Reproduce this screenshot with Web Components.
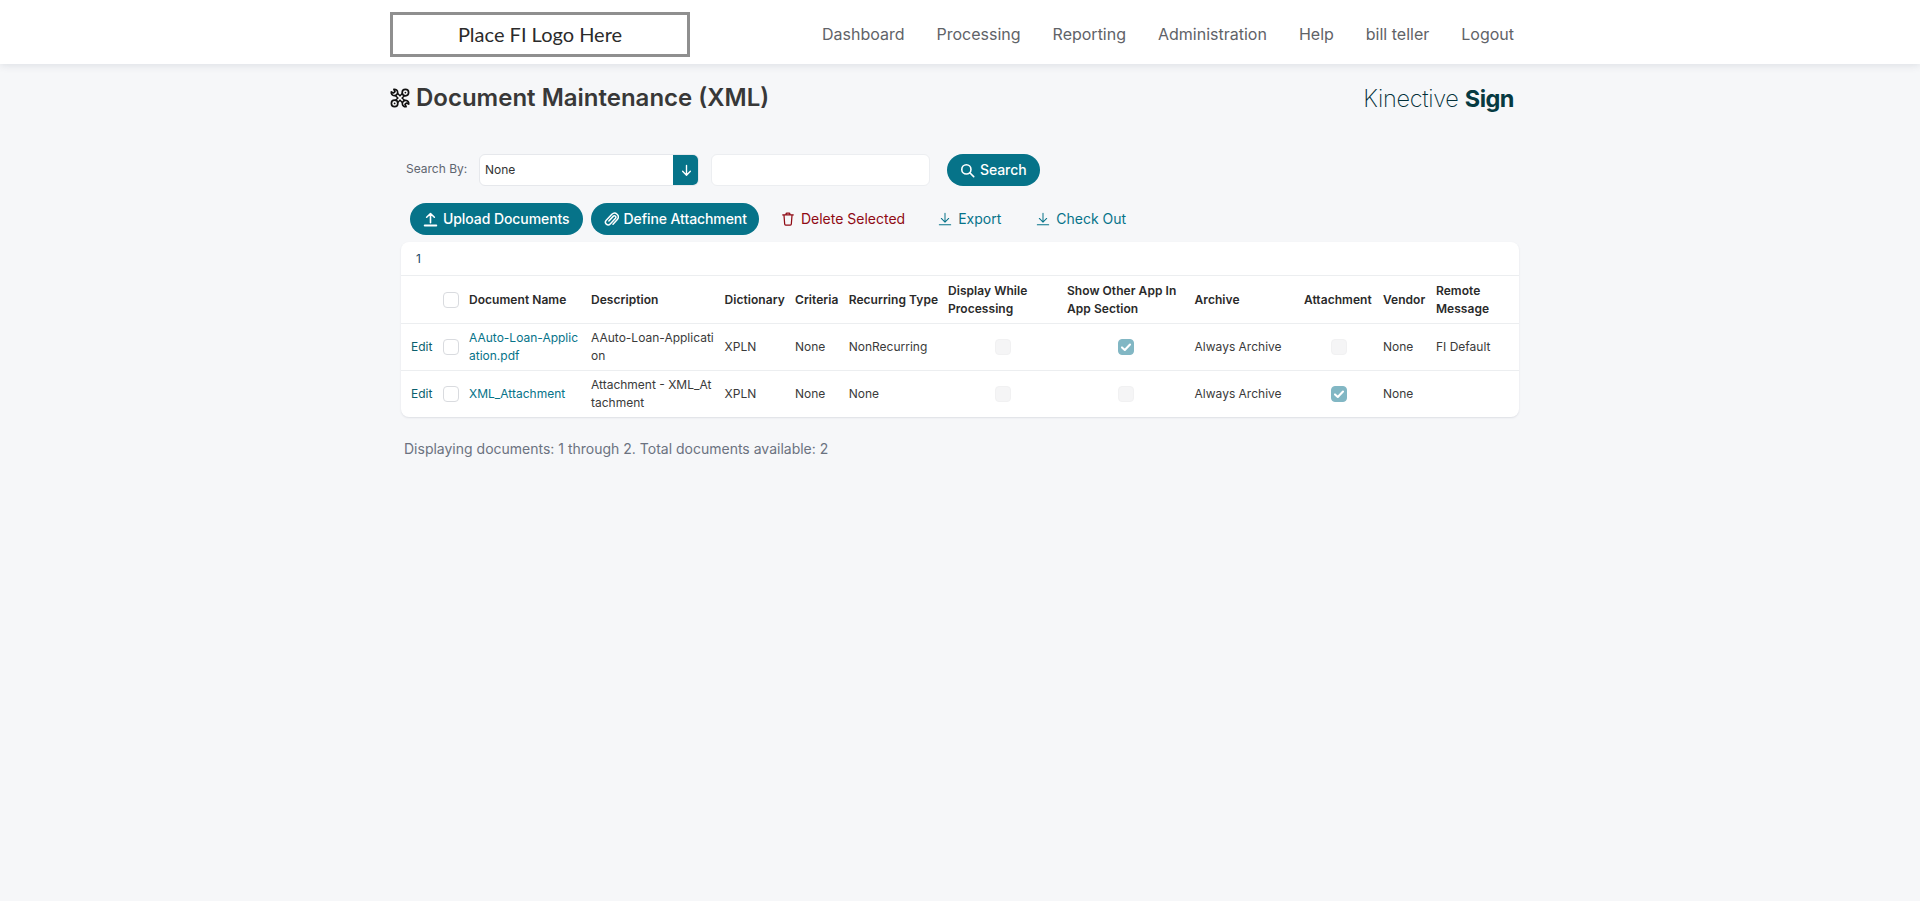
<!DOCTYPE html>
<html lang="en"><head><meta charset="utf-8"><title>Document Maintenance (XML)</title>
<style>
html,body{margin:0;padding:0;background:#f6f7f9;height:100%}
body{font-family:Inter,"Liberation Sans",sans-serif;color:#333;overflow:hidden}
</style></head><body>
<app-header>
  <nav-link>Dashboard</nav-link><nav-link>Processing</nav-link><nav-link>Reporting</nav-link><nav-link>Administration</nav-link><nav-link>Help</nav-link><nav-link>bill teller</nav-link><nav-link>Logout</nav-link>
</app-header>
<page-title>Document Maintenance (XML)</page-title>
<search-bar></search-bar>
<action-bar>
  <pill-button icon="upload">Upload Documents</pill-button>
  <pill-button icon="clip" style="padding-right:12px">Define Attachment</pill-button>
  <text-action icon="trash" tone="danger" style="margin-left:14px">Delete Selected</text-action>
  <text-action icon="down" style="margin-left:25px">Export</text-action>
  <text-action icon="down" style="margin-left:27px">Check Out</text-action>
</action-bar>
<doc-table></doc-table>
<status-line>Displaying documents: 1 through 2. Total documents available: 2</status-line>
<script>
const ICONS={
 upload:'<svg viewBox="0 0 16 16" fill="none" stroke="currentColor" stroke-width="1.7" stroke-linecap="round" stroke-linejoin="round"><path d="M8 11.4V1.8M3.9 5.6 8 1.6l4.1 4"/><path d="M1.8 14.4h12.4" stroke-width="2"/></svg>',
 clip:'<svg viewBox="0 0 16 16" fill="none" stroke="currentColor" stroke-width="1.6" stroke-linecap="round" stroke-linejoin="round"><path d="M5.2 9.6 10 4.4a1.6 1.6 0 0 1 2.3 2.2L6.6 12.8a2.9 2.9 0 0 1-4.2-4L8.4 2.4a4 4 0 0 1 5.8 5.5L9.6 13"/></svg>',
 trash:'<svg viewBox="0 0 16 16" fill="none" stroke="currentColor" stroke-width="1.4" stroke-linejoin="round" stroke-linecap="round"><path d="M2 3.4h12M3.4 3.6l.8 10.2c0 .7.5 1.2 1.2 1.2h5.2c.7 0 1.2-.5 1.2-1.2l.8-10.2M5.8 3.2V2.2c0-.6.4-1 1-1h2.4c.6 0 1 .4 1 1v1"/></svg>',
 down:'<svg viewBox="0 0 16 16" fill="none" stroke="currentColor" stroke-width="1.15" stroke-linecap="round" stroke-linejoin="round"><path d="M8 1.5v10M3.8 7.4 8 11.6l4.2-4.2M1.5 14.5h13"/></svg>',
 search:'<svg viewBox="0 0 16 16" fill="none" stroke="currentColor" stroke-width="1.7" stroke-linecap="round"><circle cx="6.8" cy="6.8" r="4.9"/><path d="m10.4 10.4 4.2 4.2"/></svg>',
 arrow:'<svg viewBox="0 0 12 14" fill="none" stroke="currentColor" stroke-width="1.5" stroke-linecap="round" stroke-linejoin="round"><path d="M6 1.5v10.5M1.8 7.9 6 12.2l4.2-4.3"/></svg>',
 tools:'<svg viewBox="0 0 20 20" fill="none" stroke="#111" stroke-linecap="round" stroke-linejoin="round"><path d="M6.4 6.4 13.6 13.6M13.6 6.4 6.4 13.6" stroke-width="4.4" stroke-linecap="butt"/><path d="M6.4 6.4 13.6 13.6M13.6 6.4 6.4 13.6" stroke="#fff" stroke-width="1.5" stroke-linecap="butt"/><g stroke-width="1.7" fill="#fff"><path d="M3.9 1.3A3.2 3.2 0 1 1 1.3 3.9L3.6 5 5 3.6Z"/><path d="M16.1 18.7A3.2 3.2 0 1 1 18.7 16.1L16.4 15 15 16.4Z"/><circle cx="15.4" cy="4.6" r="3.2"/><circle cx="4.6" cy="15.4" r="3.2"/></g><circle cx="15.4" cy="4.6" r=".9" fill="#111" stroke="none"/><circle cx="4.6" cy="15.4" r=".9" fill="#111" stroke="none"/></svg>'
};
function el(name,css,html){
  customElements.define(name,class extends HTMLElement{
    constructor(){super();this.attachShadow({mode:'open'}).innerHTML='<style>'+css+'</style>'+(typeof html==='function'?html(this):html);}
  });
}
el('app-header',`
 :host{display:block;height:64px;background:#fff;box-shadow:0 1px 8px rgba(60,70,90,.14);position:relative}
 .in{box-sizing:border-box;width:1124px;margin:0 0 0 390px;height:64px;display:flex;align-items:center;justify-content:space-between}
 .logo{box-sizing:border-box;width:300px;height:45px;margin-top:5px;border:3px solid #8f8f8f;display:flex;align-items:center;justify-content:center;font:400 20px/36px Lato,"Liberation Sans",sans-serif;color:#2b2b2b;background:#fff;padding-bottom:2px}
 nav{display:flex;gap:32px;margin-top:4px}
`,`<div class="in"><div class="logo">Place FI Logo Here</div><nav><slot></slot></nav></div>`);
el('nav-link',`:host{display:block;font:400 16px/24px Inter,sans-serif;color:#5f6368;white-space:nowrap}`,`<slot></slot>`);
el('page-title',`
 :host{display:flex;box-sizing:border-box;width:1124px;margin:19px 0 0 390px;align-items:center;justify-content:space-between;height:30px}
 .l{display:flex;align-items:center;gap:6px;font:600 24px/30px Inter,sans-serif;color:#383838;white-space:nowrap}
 svg{width:20px;height:20px;display:block}
 .k{font:250 23.5px/30px Inter,sans-serif;color:#022f38;letter-spacing:-.32px;margin-top:1px;white-space:nowrap}
 .k b{font-weight:700;letter-spacing:-.5px;color:#063a42}
`,`<div class="l">${ICONS.tools}<span><slot></slot></span></div><div class="k">Kinective <b>Sign</b></div>`);
el('pill-button',`
 :host{display:inline-flex;align-items:center;gap:5px;box-sizing:border-box;height:32px;padding:0 13px;border-radius:16px;background:#067389;color:#fff;font:500 14px/20px Inter,sans-serif;letter-spacing:-.08px;white-space:nowrap}
 span{display:flex;width:15px;height:15px} svg{width:15px;height:15px}
`,h=>`<span>${ICONS[h.getAttribute('icon')]||''}</span><slot></slot>`);
el('text-action',`
 :host{display:inline-flex;align-items:center;gap:6px;height:32px;color:#067389;font:400 14px/20px Inter,sans-serif;white-space:nowrap}
 :host([tone=danger]){color:#8f0a14}
 span{display:flex;width:14px;height:14px} svg{width:14px;height:14px}
`,h=>`<span>${ICONS[h.getAttribute('icon')]||''}</span><slot></slot>`);
el('search-bar',`
 :host{display:flex;align-items:center;margin:41px 0 0 406px;height:32px}
 label{font:400 12px/16px Inter,sans-serif;color:#5f6670;width:73px;white-space:nowrap;margin-top:-3px}
 .sel{box-sizing:border-box;width:220px;height:32px;background:#fff;border:1px solid #e6e8ec;border-radius:6px;display:flex;overflow:hidden;align-items:stretch}
 .v{flex:1;font:400 12px/30px Inter,sans-serif;color:#333;padding-left:5px}
 .b{width:26px;background:#067389;color:#fff;display:flex;align-items:center;justify-content:center;margin:-1px -1px -1px 0}
 .b svg{width:11px;height:13px}
 .inp{box-sizing:border-box;width:219px;height:32px;margin-left:12px;background:#fff;border:1px solid #eceef1;border-radius:6px}
 pill-button{margin-left:17px}
`,`<label>Search By:</label><div class="sel"><div class="v">None</div><div class="b">${ICONS.arrow}</div></div><div class="inp"></div><pill-button icon="search">Search</pill-button>`);
el('action-bar',`:host{display:flex;align-items:center;gap:8px;margin:17px 0 0 410px;height:32px}`,`<slot></slot>`);
el('check-box',`
 :host{display:inline-block;box-sizing:border-box;width:16px;height:16px;border-radius:4px;border:1px solid #d9dbdf;background:#fff;vertical-align:middle}
 :host([off]){background:#f5f5f6;border-color:#f1f1f2}
 :host([on]){background:#82b7c4;border-color:#82b7c4}
 svg{display:none;width:14px;height:14px}
 :host([on]) svg{display:block}
`,`<svg viewBox="0 0 14 14" fill="none" stroke="#fff" stroke-width="2.1" stroke-linecap="round" stroke-linejoin="round"><path d="M3 7.4 5.8 10 11 4.6"/></svg>`);
const W=[37,26,122,133.6,70.4,53.7,99.3,119,127.6,109.4,79,53,88];
const HEAD=['','<check-box></check-box>','Document Name','Description','Dictionary','Criteria','Recurring Type','Display While Processing','Show Other App In App Section','Archive','Attachment','Vendor','Remote Message'];
const off='<check-box off></check-box>',on='<check-box on></check-box>',c='<check-box></check-box>';
const ROWS=[
 ['<a>Edit</a>',c,'<a>AAuto-Loan-Application.pdf</a>','AAuto-Loan-Application','XPLN','None','NonRecurring',off,on,'Always Archive',off,'None','FI Default'],
 ['<a>Edit</a>',c,'<a>XML_Attachment</a>','Attachment - XML_Attachment','XPLN','None','None',off,off,'Always Archive',on,'None','']
];
el('doc-table',`
 :host{display:block;box-sizing:border-box;width:1118px;margin:7px 0 0 401px;background:#fff;border-radius:8px;box-shadow:0 1px 2px rgba(60,70,90,.13);overflow:hidden}
 .pg{height:34px;box-sizing:border-box;padding-left:15px;font:400 12px/33px Inter,sans-serif;color:#1d4a63;border-bottom:1px solid #eceef0}
 table{border-collapse:collapse;table-layout:fixed;width:1118px;font:400 12px/18px Inter,sans-serif;color:#3a3a3a}
 th{font-weight:600;letter-spacing:.05px;text-align:left;color:#2a2a2a;height:47px;padding-top:2px}
 th:nth-child(7){white-space:nowrap}
 td{height:47px}
 th,td{box-sizing:border-box;padding-left:5px;padding-right:5px;vertical-align:middle}
 tr+tr td,tbody tr:first-child td{border-top:1px solid #eceef0}
 th:first-child,td:first-child{padding-left:10px;padding-right:0}
 td:nth-child(3),td:nth-child(4){word-break:break-all}
 td:nth-child(8),td:nth-child(9),td:nth-child(11){text-align:center}
 td:nth-child(8),td:nth-child(11){padding-left:6px}
 a{color:#067389;text-decoration:none}
 td:first-child a{color:#0b5f6e}
`,`<div class="pg">1</div><table><colgroup>${W.map(w=>`<col style="width:${w}px">`).join('')}</colgroup>
 <thead><tr>${HEAD.map(h=>`<th>${h}</th>`).join('')}</tr></thead>
 <tbody>${ROWS.map(r=>`<tr>${r.map(d=>`<td>${d}</td>`).join('')}</tr>`).join('')}</tbody></table>`);
el('status-line',`:host{display:block;margin:22px 0 0 404px;font:400 14px/20px Inter,sans-serif;color:#6b7280;white-space:nowrap}`,`<slot></slot>`);
</script>
</body></html>
